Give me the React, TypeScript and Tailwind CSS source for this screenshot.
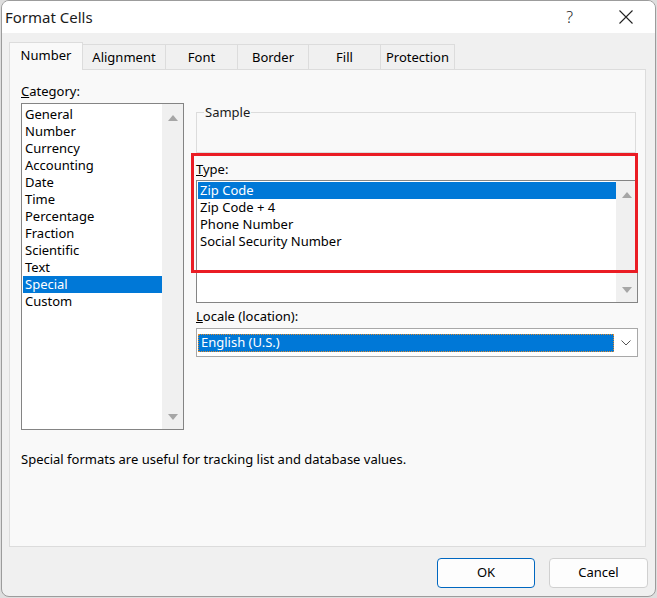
import React from "react"

const categories = [
  "General",
  "Number",
  "Currency",
  "Accounting",
  "Date",
  "Time",
  "Percentage",
  "Fraction",
  "Scientific",
  "Text",
  "Special",
  "Custom",
]

const types = ["Zip Code", "Zip Code + 4", "Phone Number", "Social Security Number"]

const tabs = [
  { label: "Alignment", w: "w-[83px]" },
  { label: "Font", w: "w-[72px]" },
  { label: "Border", w: "w-[71px]" },
  { label: "Fill", w: "w-[72px]" },
  { label: "Protection", w: "w-[74px]" },
]

function Tri({ up }: { up?: boolean }) {
  return (
    <svg width="10" height="6" viewBox="0 0 10 6">
      <path d={up ? "M0 6 L5 0 L10 6 Z" : "M0 0 L10 0 L5 6 Z"} fill="#a6a6a6" />
    </svg>
  )
}

function ScrollBar() {
  return (
    <div className="flex w-[21px] shrink-0 flex-col items-center justify-between bg-[#f0f0f0] pt-[11px] pb-[9px]">
      <Tri up />
      <Tri />
    </div>
  )
}

export default function App() {
  return (
    <div className="h-[598px] w-[657px] overflow-hidden bg-[#dedede] font-['Noto_Sans',sans-serif] text-[13px] text-black">
      <div className="ml-px flex h-[597px] w-[655px] flex-col overflow-hidden rounded-[8px] border border-[#9c9c9c] bg-[#f0f0f0]">
        {/* title bar */}
        <div className="flex h-[32px] shrink-0 items-center bg-white">
          <div className="ml-[3px] text-[15px] leading-none text-[#1b1b1b]">Format Cells</div>
          <div className="mr-[46px] ml-auto text-[16px] font-light leading-none text-[#222]">?</div>
          <svg width="14" height="14" viewBox="0 0 14 14" className="mr-[22px]">
            <path d="M0.5 0.5 L13.5 13.5 M13.5 0.5 L0.5 13.5" stroke="#222" strokeWidth="1.1" />
          </svg>
        </div>

        {/* tabs */}
        <div className="flex h-[36px] shrink-0 items-end pl-[7px]">
          <div className="relative z-10 -mb-px flex h-[28px] w-[74px] items-center justify-center border border-b-0 border-[#dcdcdc] bg-[#f9f9f9] pb-[2px] leading-none">
            Number
          </div>
          {tabs.map((t) => (
            <div
              key={t.label}
              className={`flex h-[25px] ${t.w} items-center justify-center border-t border-r border-[#dcdcdc] bg-[#f0f0f0] leading-none`}
            >
              {t.label}
            </div>
          ))}
        </div>

        {/* panel */}
        <div className="ml-[7px] flex h-[478px] w-[637px] shrink-0 flex-col border border-[#dcdcdc] bg-[#f9f9f9] pl-[11px]">
          <div className="flex gap-[12px]">
            {/* category column */}
            <div className="mt-[13px] flex w-[163px] flex-col">
              <div className="h-[17px] leading-[17px]">
                <span className="underline">C</span>ategory:
              </div>
              <div className="mt-[3px] flex h-[327px] border border-[#848484] bg-white">
                <div className="flex-1 pt-[2px] pl-px">
                  {categories.map((c) => (
                    <div
                      key={c}
                      className={`h-[17px] pl-[2px] leading-[17px] ${c === "Special" ? "bg-[#0078d7] text-white" : ""}`}
                    >
                      {c}
                    </div>
                  ))}
                </div>
                <ScrollBar />
              </div>
            </div>

            {/* right column */}
            <div className="relative mt-[34px] flex w-[442px] flex-col">
              <fieldset className="mr-[2px] h-[49px] border border-[#dcdcdc]">
                <legend className="ml-[7px] px-px leading-[17px] text-[#1b1b1b]">Sample</legend>
              </fieldset>

              <div className="mt-[8px] h-[17px] leading-[17px]">
                <span className="underline">T</span>ype:
              </div>
              <div className="mt-[2px] flex h-[123px] border border-[#848484] bg-white">
                <div className="flex-1 pt-px pl-px">
                  {types.map((t) => (
                    <div
                      key={t}
                      className={`h-[17px] pl-[2px] leading-[17px] ${t === "Zip Code" ? "bg-[#0078d7] text-white" : ""}`}
                    >
                      {t}
                    </div>
                  ))}
                </div>
                <ScrollBar />
              </div>

              <div className="mt-[5px] h-[17px] leading-[17px]">
                <span className="underline">L</span>ocale (location):
              </div>
              <div className="mt-[3px] flex h-[29px] items-center border border-[#a8a8a8] bg-white pl-px">
                <div className="flex h-[18px] flex-1 items-center border border-dotted border-[#e08a2c] bg-[#0078d7] pl-[2px] text-white">
                  English (U.S.)
                </div>
                <div className="flex w-[23px] items-center justify-center">
                  <svg width="10" height="6" viewBox="0 0 10 6">
                    <path d="M0.5 0.5 L5 5 L9.5 0.5" stroke="#555" strokeWidth="1" fill="none" />
                  </svg>
                </div>
              </div>

              {/* annotation box */}
              <div className="absolute top-[49px] left-[-5px] h-[120px] w-[447px] border-[3px] border-[#ea1c24]" />
            </div>
          </div>

          <div className="mt-[21px] leading-[17px]">
            Special formats are useful for tracking list and database values.
          </div>
        </div>

        {/* footer */}
        <div className="mt-[11px] flex justify-end gap-[14px] pr-[7px]">
          <button className="h-[30px] w-[98px] rounded-[4px] border border-[#0067c0] bg-[#fdfdfd] text-[13px]">
            OK
          </button>
          <button className="h-[30px] w-[99px] rounded-[4px] border border-[#d0d0d0] bg-[#fdfdfd] text-[13px]">
            Cancel
          </button>
        </div>
      </div>
    </div>
  )
}
